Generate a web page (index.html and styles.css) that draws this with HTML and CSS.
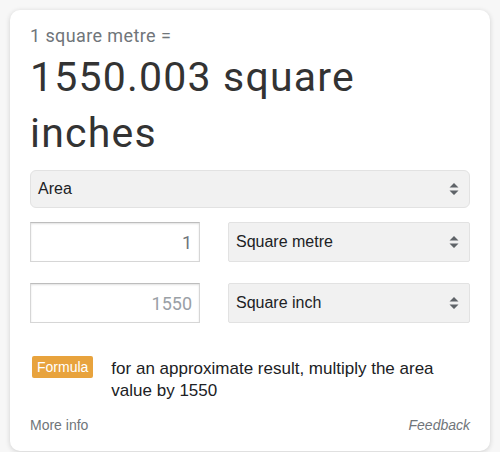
FILE: index.html
```html
<!DOCTYPE html>
<html>
<head>
    <title>Area converter</title>
    <link rel="stylesheet" href="styles.css">
</head>
<body>
    <div class="card">
        <div class="equation">1 square metre =</div>
        <div class="result">1550.003 square inches</div>

        <div class="select select-wide">
            <span>Area</span>
            <svg class="arrows" width="10" height="14" viewBox="0 0 10 14"><path d="M5 1 L9.5 5.5 H0.5 Z M5 13 L9.5 8.5 H0.5 Z" fill="#5f6368"/></svg>
        </div>

        <div class="row">
            <input class="amount" type="text" value="1">
            <div class="select">
                <span>Square metre</span>
                <svg class="arrows" width="10" height="14" viewBox="0 0 10 14"><path d="M5 1 L9.5 5.5 H0.5 Z M5 13 L9.5 8.5 H0.5 Z" fill="#5f6368"/></svg>
            </div>
        </div>

        <div class="row">
            <input class="amount light" type="text" value="1550">
            <div class="select">
                <span>Square inch</span>
                <svg class="arrows" width="10" height="14" viewBox="0 0 10 14"><path d="M5 1 L9.5 5.5 H0.5 Z M5 13 L9.5 8.5 H0.5 Z" fill="#5f6368"/></svg>
            </div>
        </div>

        <div class="formula">
            <span class="badge">Formula</span>
            <p>for an approximate result, multiply the area value by 1550</p>
        </div>

        <div class="footer">
            <span>More info</span>
            <span class="feedback">Feedback</span>
        </div>
    </div>
</body>
</html>
```

FILE: styles.css
```css
body {
    margin: 0;
    padding: 10px;
    background-color: #f7f7f7;
    font-family: "Liberation Sans", Arial, sans-serif;
}
.card {
    background-color: #fff;
    border-radius: 10px;
    box-shadow: 0 1px 5px rgba(32, 33, 36, 0.18);
    padding: 14px 20px 18px 20px;
}
.equation {
    font-family: Roboto, sans-serif;
    font-size: 18px;
    line-height: 24px;
    letter-spacing: 0.4px;
    color: #70757a;
}
.result {
    max-width: 400px;
    font-family: Roboto, sans-serif;
    font-size: 41px;
    line-height: 56px;
    letter-spacing: 1.2px;
    color: #333;
    margin-top: 1px;
}
.select {
    display: flex;
    align-items: center;
    justify-content: space-between;
    box-sizing: border-box;
    height: 40px;
    padding: 0 10px 0 7px;
    background-color: #f1f1f1;
    border: 1px solid #e2e2e2;
    border-radius: 2px;
    font-size: 16px;
    color: #202124;
    flex: 1;
}
.select-wide {
    height: 38px;
    margin-top: 9px;
    border-radius: 6px;
}
.row {
    display: flex;
    gap: 28px;
    margin-top: 14px;
}
.row + .row {
    margin-top: 21px;
}
.amount {
    box-sizing: border-box;
    width: 170px;
    height: 40px;
    margin: 0;
    padding: 0 7px;
    border: 1px solid #d6d6d6;
    border-top-color: #bdbdbd;
    box-shadow: inset 0 1px 2px rgba(0, 0, 0, 0.12);
    font-family: Roboto, sans-serif;
    font-size: 18px;
    color: #70757a;
    text-align: right;
}
.amount.light {
    color: #9aa0a6;
}
.formula {
    display: flex;
    align-items: flex-start;
    gap: 18px;
    margin-top: 33px;
    padding-left: 2px;
}
.badge {
    flex: none;
    background-color: #e8a33d;
    color: #fff;
    font-size: 14px;
    line-height: 22px;
    padding: 0 5px;
    border-radius: 2px;
}
.formula p {
    max-width: 340px;
    margin: 2px 0 0 0;
    font-size: 17px;
    line-height: 22px;
    color: #202124;
}
.footer {
    display: flex;
    justify-content: space-between;
    margin-top: 15px;
    font-size: 14px;
    line-height: 16px;
    color: #70757a;
}
.feedback {
    font-style: italic;
}
```
